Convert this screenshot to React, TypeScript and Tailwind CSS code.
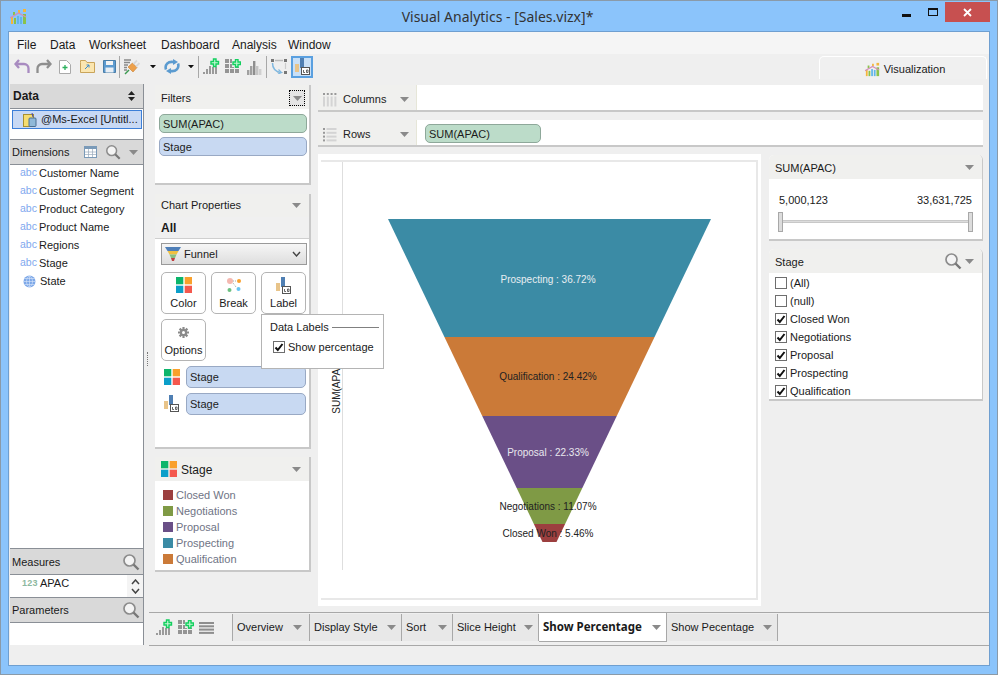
import React from "react";

const Caret = ({ c = "#8a8a8a", w = 9 }: { c?: string; w?: number }) => (
  <svg width={w} height={w * 5 / 9} viewBox="0 0 9 5"><path d="M0 0h9L4.500 5z" fill={c} /></svg>
);
const Search = ({ s = 18 }: { s?: number }) => (
  <svg width={s} height={s} viewBox="0 0 18 18" fill="none">
    <circle cx="7.500" cy="7.500" r="5.500" stroke="#8c8c8c" strokeWidth="1.700" fill="#f4f4f4" />
    <path d="M11.500 11.500 16.500 16.500" stroke="#777" strokeWidth="2.400" />
  </svg>
);
const Quad = ({ s = 16 }: { s?: number }) => (
  <svg width={s} height={s} viewBox="0 0 16 16">
    <rect x="0" y="0" width="7.300" height="7.300" fill="#0cb56b" />
    <rect x="8.700" y="0" width="7.300" height="7.300" fill="#f9a02c" />
    <rect x="0" y="8.700" width="7.300" height="7.300" fill="#0b9ec9" />
    <rect x="8.700" y="8.700" width="7.300" height="7.300" fill="#f4584e" />
  </svg>
);
const LabelIcon = () => (
  <svg width="15" height="17" viewBox="0 0 15 17">
    <rect x="0" y="6" width="4" height="8" fill="#e8c48a" />
    <rect x="5" y="0" width="4" height="10" fill="#4f7fb3" />
    <rect x="6.500" y="9.500" width="8" height="7" fill="#fff" stroke="#555" />
    <path d="M8.500 12v2.500h1.500M11.500 12h1.500v2.500h-1.500z" stroke="#444" fill="none" strokeWidth=".8" />
  </svg>
);
const PlusMark = ({ x, y }: { x: number; y: number }) => (
  <path
    transform={`translate(${x} ${y})`}
    d="M3 1h2.500v2.500H8V6H5.500v2.500H3V6H.5V3.500H3z"
    fill="#c9f7d6"
    stroke="#12cf5e"
    strokeWidth="1.400"
  />
);
const BarPlus = () => (
  <svg width="17" height="17" viewBox="0 0 17 17">
    {[[0, 14, 2], [3, 11, 5], [6, 8, 8], [9, 9, 7], [12, 9, 7]].map(([x, y, h]) => (
      <rect key={x} x={x} y={y} width="2" height={h} fill="#9a9a9a" />
    ))}
    <PlusMark x={7.500} y={0} />
  </svg>
);
const BarGray = () => (
  <svg width="15" height="16" viewBox="0 0 15 16">
    {[[0, 11, 5, "#a0a0a0"], [3, 7, 9, "#a0a0a0"], [6, 2, 14, "#8e8e8e"], [9, 7, 9, "#c4c4c4"], [12, 10, 6, "#d0d0d0"]].map(([x, y, h, c]) => (
      <rect key={x as number} x={x as number} y={y as number} width="2.400" height={h as number} fill={c as string} />
    ))}
  </svg>
);
const GridPlus = () => (
  <svg width="16" height="15" viewBox="0 0 16 15">
    {[0, 5, 10].map((x) => [0, 5, 10].map((y) => <rect key={`${x}${y}`} x={x} y={y} width="4" height="4" fill="#949494" />))}
    <rect x="7" y="0" width="9" height="8" fill="#f0f0f0" />
    <PlusMark x={7.500} y={-.5} />
  </svg>
);
const ListIcon = () => (
  <svg width="15" height="12" viewBox="0 0 15 12">
    {[0, 3.300, 6.600, 9.900].map((y) => <rect key={y} x="0" y={y} width="15" height="2" fill="#8e8e8e" />)}
  </svg>
);
const Check = ({ on }: { on: boolean }) => (
  <span className="w-[12px] h-[12px] shrink-0 border border-[#6e6e6e] bg-white flex items-center justify-center">
    {on && (
      <svg width="10" height="9" viewBox="0 0 10 9"><path d="M1.500 4.500 3.800 7 8.500 1" stroke="#111" strokeWidth="2" fill="none" /></svg>
    )}
  </span>
);
const AppLogo = ({ s = 17 }: { s?: number }) => (
  <svg width={s} height={s} viewBox="0 0 17 17">
    <rect x="1" y="9" width="2" height="7" fill="#f4b63c" />
    <rect x="4" y="10" width="2" height="6" fill="#8ac24a" />
    <rect x="7" y="8" width="2" height="8" fill="#62b6e8" />
    <rect x="10" y="9" width="2" height="7" fill="#62b6e8" />
    <rect x="13" y="1" width="3" height="3" fill="#f4b63c" />
    <rect x="13" y="6" width="3" height="10" fill="#8ac24a" />
    <rect x="8" y="2" width="2" height="3" fill="#f4b63c" />
    <rect x="3" y="4" width="2" height="3" fill="#8ac24a" />
    <path d="M0 10 8.500 5 16 9" stroke="#d48fb8" strokeWidth="1.400" fill="none" />
  </svg>
);

const Tool = ({ children, w = 23, cls = "" }: { children: React.ReactNode; w?: number; cls?: string }) => (
  <span style={{ width: w }} className={`h-[22px] flex items-center justify-center shrink-0 ${cls}`}>{children}</span>
);
const Sep = () => <span className="w-px h-[22px] bg-[#a8a8a8] shrink-0" />;
const BlackCaret = () => <Caret c="#111" w={6} />;

const Pill = ({ text, green = false, cls = "" }: { text: string; green?: boolean; cls?: string }) => (
  <div className={`h-[19px] rounded-[5px] border flex items-center pl-[3px] pt-[2px] text-[#1c1c1c] ${green ? "bg-[#bcdcc9] border-[#8ea89a]" : "bg-[#c8d9f2] border-[#99a9c4]"} ${cls}`}>{text}</div>
);

const PanelHead = ({ children, h = 24, cls = "pt-[2px]" }: { children: React.ReactNode; h?: number; cls?: string }) => (
  <div style={{ height: h }} className={`bg-[#f0f0ee] flex items-center justify-between pl-[6px] pr-[8px] shrink-0 ${cls}`}>{children}</div>
);

const ToolBtn = ({ icon, text }: { icon: React.ReactNode; text: string }) => (
  <div className="w-[45px] h-[42px] border border-[#b4b4b4] rounded-[5px] bg-white flex flex-col items-center pt-[3px]">
    <span className="h-[18px] flex items-center">{icon}</span>
    <span className="mt-[4px]">{text}</span>
  </div>
);

const Tab = ({ text, w, active = false, cls = "pr-[5px]" }: { text: string; w: number; active?: boolean; cls?: string }) => (
  <div style={{ width: w }} className={`flex items-center justify-between pl-[4px] shrink-0 border-r border-[#a8a8a8] ${cls} ${active ? "bg-white h-[29px] border-b -mt-[1px]" : "bg-[#e8e8e8] h-[27px]"}`}>
    <span className={active ? "font-['Noto_Sans',sans-serif] font-bold text-[11.500px]" : ""}>{text}</span><Caret />
  </div>
);

const dims = ["Customer Name", "Customer Segment", "Product Category", "Product Name", "Regions", "Stage"];
const legend = [["Closed Won", "#9c3f3f"], ["Negotiations", "#7f9a45"], ["Proposal", "#6a4f87"], ["Prospecting", "#3b8ba5"], ["Qualification", "#cb7a38"]];
const stage: [string, boolean][] = [["(All)", false], ["(null)", false], ["Closed Won", true], ["Negotiations", true], ["Proposal", true], ["Prospecting", true], ["Qualification", true]];

const F = (y: number) => y - 162;
const seg = (y1: number, y2: number) => {
  const hw = (y: number) => 161.500 - ((y - 219) * 154.500) / 323;
  const c = 549.500 - 321;
  return `${c - hw(y1)},${y1 - 162} ${c + hw(y1)},${y1 - 162} ${c + hw(y2)},${y2 - 162} ${c - hw(y2)},${y2 - 162}`;
};

export default function App() {
  return (
    <div className="w-[998px] h-[675px] bg-[#8bc4fb] border border-[#8a9aa8] flex flex-col font-['Liberation_Sans',sans-serif] text-[11px] leading-none text-[#1a1a1a] overflow-hidden">
      {/* title bar */}
      <div className="h-[30px] flex items-center shrink-0">
        <span className="ml-[9px]"><AppLogo /></span>
        <div className="flex-1 text-center text-[14px] text-[#333] pl-[66px] pt-[2px] font-['Noto_Sans',sans-serif]">Visual Analytics - [Sales.vizx]*</div>
        <div className="flex items-start self-start">
          <span className="w-[9px] h-[3px] bg-[#111] mt-[13px] mr-[17px]" />
          <span className="w-[10px] h-[8px] border border-[#111] border-t-[2px] mt-[7px] mr-[7px]" />
          <span className="w-[45px] h-[20px] bg-[#c75050] flex items-center justify-center mt-[1px] mr-[7px]">
            <svg width="9" height="9" viewBox="0 0 9 9"><path d="M1 1l7 7M8 1l-7 7" stroke="#fff" strokeWidth="1.800" /></svg>
          </span>
        </div>
      </div>

      {/* client */}
      <div className="mx-[7px] h-[635px] border border-[#6f9fd0] bg-[#efefef] flex flex-col shrink-0">
        <div className="h-[22px] bg-[#f5f5f5] flex items-center pl-[8px] pt-[3px] gap-[16px] text-[12px] shrink-0">
          <span className="w-[17px]">File</span>
          <span className="w-[23px]">Data</span>
          <span className="w-[56px]">Worksheet</span>
          <span className="w-[55px]">Dashboard</span>
          <span className="w-[40px]">Analysis</span>
          <span>Window</span>
        </div>

        <div className="h-[25px] flex items-center pl-[1px] shrink-0 relative">
          <Tool w={23}>
            <svg width="16" height="15" viewBox="0 0 16 15" fill="none"><path d="M5 1 1.500 5 5 9M2 5h8a4.500 4.500 0 0 1 4.500 4.500V14" stroke="#a88bc0" strokeWidth="2.300" /></svg>
          </Tool>
          <Tool w={21}>
            <svg width="16" height="15" viewBox="0 0 16 15" fill="none"><path d="M11 1l3.500 4L11 9M14 5H6a4.500 4.500 0 0 0-4.500 4.500V14" stroke="#8e8e8e" strokeWidth="2.300" /></svg>
          </Tool>
          <Tool w={21}>
            <svg width="12" height="14" viewBox="0 0 12 14"><path d="M.5.5h7l4 4v9H.5z" fill="#fff" stroke="#aaa" /><path d="M6 5v5M3.500 7.500h5" stroke="#2bb05c" strokeWidth="1.300" /></svg>
          </Tool>
          <Tool w={24}>
            <svg width="15" height="13" viewBox="0 0 15 13"><path d="M.5 2.500V.5h5l1.500 2h7.500v10H.5z" fill="#fbe6b0" stroke="#c9a45a" /><path d="M5 9l4-4M6.500 5H9v2.500" stroke="#3b8bcc" fill="none" /></svg>
          </Tool>
          <Tool w={20}>
            <svg width="13" height="13" viewBox="0 0 13 13"><path d="M.5.5h12v12H.5z" fill="#5d9bd0" stroke="#4a7ea8" /><rect x="3" y="1" width="7" height="4" fill="#f4f4f4" /><rect x="2.500" y="7.500" width="8" height="5" fill="#e8eef4" /></svg>
          </Tool>
          <Sep />
          <Tool w={25}>
            <svg width="17" height="17" viewBox="0 0 17 17">
              <path d="M0 2h7M0 4.500h6M0 7h4M0 9.500h3M0 12h3" stroke="#8a8a8a" strokeWidth="1.300" />
              <path d="M1 16 5 12" stroke="#3a9a50" strokeWidth="1.500" />
              <path d="M4 9l5 5 4-4.500L8.500 5z" fill="#eda04a" stroke="#c98030" strokeWidth=".6" />
              <path d="M9.500 6 13 2.500M12 8.500 15.500 5" stroke="#d8d8d8" strokeWidth="1.800" />
            </svg>
          </Tool>
          <Tool w={16}><BlackCaret /></Tool>
          <Tool w={22}>
            <svg width="16" height="15" viewBox="0 0 16 15" fill="none">
              <path d="M2 10.500C.5 6 4 2 9.500 3" stroke="#5b9bd0" strokeWidth="2.600" />
              <path d="M9 0l5 3-5 3z" fill="#5b9bd0" />
              <path d="M14 4.500c1.500 4.500-2 8.500-7.500 7.500" stroke="#5b9bd0" strokeWidth="2.600" />
              <path d="M7 9l-5 3 5 3z" fill="#5b9bd0" />
            </svg>
          </Tool>
          <Tool w={15}><BlackCaret /></Tool>
          <Sep />
          <Tool w={24}><BarPlus /></Tool>
          <Tool w={20}><GridPlus /></Tool>
          <Tool w={23}><BarGray /></Tool>
          <Sep />
          <Tool w={24}>
            <svg width="16" height="15" viewBox="0 0 16 15" fill="none">
              <path d="M4 1.500h8" stroke="#bbb" strokeWidth="1.500" />
              <path d="M14.500 4v6M6 13.500h6" stroke="#ccc" strokeWidth="1.200" />
              <rect x="0" y="0" width="3" height="3" fill="#777" /><rect x="13" y="0" width="3" height="3" fill="#777" /><rect x="13" y="12" width="3" height="3" fill="#777" />
              <path d="M1.500 4c0 5 3 8.500 8 9.500" stroke="#7fb8e0" strokeWidth="1.500" />
              <path d="M7.500 10.500l3 3-3.500 1.500" stroke="#7fb8e0" strokeWidth="1.200" />
            </svg>
          </Tool>
          <Tool w={22} cls="bg-[#c9e0f7] border-2 border-[#5aa0e0]"><LabelIcon /></Tool>

          <div className="absolute right-[2px] top-[2px] w-[168px] h-[23px] border-t border-l border-r border-white rounded-t-[5px] bg-[#f0f0f0] flex items-center justify-center gap-[4px] pl-[4px] pt-[3px]">
            <AppLogo s={15} />
            <span>Visualization</span>
          </div>
        </div>

        {/* main */}
        <div className="h-[566px] flex shrink-0 pt-[5px]">
          {/* left column */}
          <div className="w-[134px] flex flex-col shrink-0 border-r border-[#8a8f96] ml-px">
            <div className="h-[24px] bg-[#d9d9d9] flex items-center justify-between px-[3px] pr-[8px] font-bold text-[12px] shrink-0">
              <span>Data</span>
              <svg width="7" height="10" viewBox="0 0 7 10"><path d="M0 4h7L3.500 0zM0 6h7L3.500 10z" fill="#222" /></svg>
            </div>
            <div className="h-[32px] bg-white border-y border-[#8a8f96] pt-[1px] pl-[2px] pr-[1px] shrink-0">
              <div className="h-[19px] bg-[#c8d9f4] border border-[#3c7fd8] flex items-center pl-[10px] gap-[4px] whitespace-nowrap overflow-hidden">
                <svg width="14" height="14" viewBox="0 0 14 14" className="shrink-0"><rect x="0.500" y="1.500" width="10" height="12" fill="#f5dd70" stroke="#a89030" /><rect x="6" y="5" width="7" height="8.500" rx="1" fill="#8fb8d8" stroke="#4a6e90" /><path d="M9 0 10 4" stroke="#44a" /></svg>
                <span>@Ms-Excel [Untitl...</span>
              </div>
            </div>
            <div className="h-[24px] bg-[#d9d9d9] flex items-center pl-[2px] pr-[5px] shrink-0">
              <span className="flex-1">Dimensions</span>
              <svg width="13" height="12" viewBox="0 0 13 12" className="mr-[8px]"><rect x=".5" y=".5" width="12" height="11" fill="#fff" stroke="#7a9ab8" /><rect x=".5" y=".5" width="12" height="2.500" fill="#7a9ab8" /><path d="M4.500 3v8M8.500 3v8M1 6h11M1 8.500h11" stroke="#9ab" strokeWidth=".7" /></svg>
              <span className="mr-[8px]"><Search s={16} /></span>
              <Caret />
            </div>
            <div className="flex-1 bg-white border-y border-[#8a8f96] flex flex-col">
              {dims.map((d, i) => (
                <div key={d} className={`h-[18px] flex items-center pl-[10px] gap-[3px] whitespace-nowrap ${i === 0 ? "-mt-px" : ""}`}>
                  <span className="w-[16px] text-[#7fa8ee] text-[10.500px] leading-none -mt-[2px]">abc</span>
                  <span>{d}</span>
                </div>
              ))}
              <div className="h-[18px] flex items-center pl-[13px] gap-[4px]">
                <svg width="13" height="13" viewBox="0 0 13 13" fill="none"><circle cx="6.500" cy="6.500" r="6" fill="#7da8e8" /><path d="M.5 6.500h12M1.500 3.500h10M1.500 9.500h10M6.500.5v12M6.500.5c-4 3-4 9 0 12M6.500.5c4 3 4 9 0 12" stroke="#dbe7fa" strokeWidth=".6" /></svg>
                <span>State</span>
              </div>
            </div>
            <div className="h-[25px] bg-[#d9d9d9] flex items-center justify-between pl-[2px] pr-[3px] shrink-0"><span className="mt-[2px]">Measures</span><Search /></div>
            <div className="h-[24px] bg-white border-y border-[#8a8f96] flex items-start pl-[12px] gap-[4px] shrink-0 relative pt-[3px]">
              <span className="text-[#8cb8a0] text-[9px] font-bold w-[14px] mt-[1px] tracking-[.2px]">123</span>
              <span>APAC</span>
              <span className="absolute right-0 top-0 h-full w-[16px] bg-[#f4f4f4] flex flex-col items-center justify-around py-[2px]">
                <svg width="9" height="6" viewBox="0 0 9 6" fill="none"><path d="M1 5l3.500-4L8 5" stroke="#444" strokeWidth="1.500" /></svg>
                <svg width="9" height="6" viewBox="0 0 9 6" fill="none"><path d="M1 1l3.500 4L8 1" stroke="#444" strokeWidth="1.500" /></svg>
              </span>
            </div>
            <div className="h-[24px] bg-[#d9d9d9] flex items-center justify-between pl-[2px] pr-[3px] shrink-0"><span>Parameters</span><Search /></div>
            <div className="h-[23px] bg-white border-t border-[#8a8f96] shrink-0" />
          </div>

          {/* middle + right */}
          <div className="flex-1 flex flex-col min-w-0">
            <div className="h-[528px] flex shrink-0 items-start pt-px">
              {/* splitter area */}
              <div className="w-[11px] self-stretch flex items-center justify-center shrink-0 pb-[10px]">
                <span className="w-px h-[14px] border-l border-dotted border-[#777] mt-[30px] -ml-[5px]" />
              </div>
              {/* middle column */}
              <div className="w-[156px] flex flex-col gap-[9px] shrink-0">
                <div className="h-[100px] bg-white border-r-2 border-b-2 border-[#c8c8c8]">
                  <PanelHead>
                    <span>Filters</span>
                    <span className="w-[16px] h-[16px] border border-dotted border-black flex items-center justify-center -mr-[4px] bg-[#e4e4e4]"><Caret /></span>
                  </PanelHead>
                  <div className="px-[4px] pt-[5px] pr-[2px] flex flex-col gap-[4px]">
                    <Pill text="SUM(APAC)" green />
                    <Pill text="Stage" />
                  </div>
                </div>

                <div className="h-[255px] bg-white border-r-2 border-b-2 border-[#c8c8c8] relative">
                  <PanelHead h={23} cls=""><span>Chart Properties</span><Caret /></PanelHead>
                  <div className="h-[22px] bg-[#f0f0f0] border-b border-[#cfcfcf] flex items-center pl-[6px] font-bold text-[12px]">All</div>
                  <div className="pl-[6px] pr-[2px] pt-[4px]">
                    <div className="h-[22px] w-[146px] border border-[#9a9a9a] bg-gradient-to-b from-[#f6f6f6] to-[#dedede] flex items-center pl-[3px]">
                      <svg width="16" height="14" viewBox="0 0 16 14"><path d="M0 0h16l-2.500 4h-11z" fill="#4f7fb8" /><path d="M2.500 4h11L11.500 7.500h-7z" fill="#f0c040" /><path d="M4.500 7.500h7L10 11H6z" fill="#8ac080" /><path d="M6 11h4l-1 3H7z" fill="#c04040" /></svg>
                      <span className="ml-[3px] flex-1">Funnel</span>
                      <svg width="9" height="6" viewBox="0 0 9 6" fill="none" className="mr-[5px]"><path d="M1 1l3.500 4L8 1" stroke="#444" strokeWidth="1.400" /></svg>
                    </div>
                    <div className="flex gap-[5px] mt-[7px]">
                      <ToolBtn icon={<Quad />} text="Color" />
                      <ToolBtn text="Break" icon={
                        <svg width="16" height="16" viewBox="0 0 16 16"><circle cx="4" cy="4" r="3" fill="#f4b8b0" /><circle cx="13" cy="4" r="2" fill="#f9a02c" /><circle cx="3.500" cy="13" r="2" fill="#6cc080" /><circle cx="12.500" cy="12" r="2" fill="#68c4f0" /><path d="M7 4h3M7 6l3 4" stroke="#aaa" strokeDasharray="1 1" /></svg>
                      } />
                      <ToolBtn icon={<LabelIcon />} text="Label" />
                    </div>
                    <div className="mt-[5px]">
                      <ToolBtn text="Options" icon={
                        <svg width="13" height="13" viewBox="0 0 13 13"><path d="M6.500 1v11M1 6.500h11M2.600 2.600l7.800 7.800M10.400 2.600l-7.800 7.800" stroke="#8a8a8a" strokeWidth="2.200" /><circle cx="6.500" cy="6.500" r="3.600" fill="#8a8a8a" /><circle cx="6.500" cy="6.500" r="1.500" fill="#fff" /></svg>
                      } />
                    </div>
                    <div className="flex items-center mt-[4px] h-[23px]">
                      <span className="ml-[3px] mr-[6px] flex"><Quad /></span>
                      <Pill text="Stage" cls="w-[120px] h-[22px]" />
                    </div>
                    <div className="flex items-center mt-[4px] h-[23px]">
                      <span className="ml-[3px] mr-[7px] flex"><LabelIcon /></span>
                      <Pill text="Stage" cls="w-[120px] h-[22px]" />
                    </div>
                  </div>
                  <div className="absolute left-[106px] top-[120px] w-[123px] h-[55px] bg-white border border-[#b4b4b4] z-10 pl-[8px] pt-[7px]">
                    <div className="flex items-center">
                      <span className="whitespace-nowrap">Data Labels</span>
                      <span className="flex-1 h-px bg-[#808080] ml-[3px] mr-[4px]" />
                    </div>
                    <div className="flex items-center mt-[8px] ml-[3px] gap-[3px] whitespace-nowrap">
                      <Check on /><span>Show percentage</span>
                    </div>
                  </div>
                </div>

                <div className="h-[115px] -mt-px bg-white border-r-2 border-b-2 border-[#c8c8c8]">
                  <PanelHead cls="">
                    <span className="flex items-center gap-[4px] text-[12px]"><Quad /><span className="mt-[1px]">Stage</span></span>
                    <Caret />
                  </PanelHead>
                  <div className="pt-[6px] pl-[8px] flex flex-col">
                    {legend.map(([t, c]) => (
                      <div key={t} className="h-[16px] flex items-center gap-[3px] text-[#6f7485]">
                        <span style={{ background: c }} className="w-[10px] h-[10px]" />
                        <span>{t}</span>
                      </div>
                    ))}
                  </div>
                </div>
              </div>

              {/* right area */}
              <div className="flex-1 ml-[7px] mr-[6px] flex flex-col min-w-0">
                <div className="h-[27px] bg-white border-b-2 border-[#c8c8c8] flex shrink-0">
                  <div className="w-[99px] h-full bg-[#f0f0ee] border-r border-[#e6e6d8] flex items-center pl-[5px] pr-[7px] gap-[6px] pt-[4px]">
                    <svg width="14" height="14" viewBox="0 0 14 14">{[0, 3.800, 7.600, 11.400].map((x) => <g key={x}><rect x={x} y="0" width="2" height="2" fill="#999" /><rect x={x} y="3.500" width="2" height="10" fill="#d4d4d4" /></g>)}</svg>
                    <span className="flex-1 text-[#222]">Columns</span><Caret />
                  </div>
                </div>
                <div className="h-[27px] mt-[8px] bg-white border-b-2 border-[#c8c8c8] flex shrink-0">
                  <div className="w-[99px] h-full bg-[#f0f0ee] border-r border-[#e6e6d8] flex items-center pl-[5px] pr-[7px] gap-[6px] pt-[4px]">
                    <svg width="14" height="14" viewBox="0 0 14 14">{[0, 3.800, 7.600, 11.400].map((y) => <g key={y}><rect x="0" y={y} width="2" height="2" fill="#999" /><rect x="3.500" y={y} width="10" height="2" fill="#d4d4d4" /></g>)}</svg>
                    <span className="flex-1 text-[#222]">Rows</span><Caret />
                  </div>
                  <div className="pl-[8px] pt-[4px]"><Pill text="SUM(APAC)" green cls="w-[116px]" /></div>
                </div>
                <div className="flex mt-[7px] gap-[8px]">
                  <div className="w-[443px] h-[452px] bg-white pt-[6px] pl-[3px] pr-[3px] shrink-0">
                    <div className="w-[437px] h-[440px] border-t-2 border-r-2 border-b-2 border-[#e8e8e8] relative">
                      <svg width="435" height="436" viewBox="0 0 435 436" className="block">
                        <line x1="21.500" y1="0" x2="21.500" y2="408" stroke="#dedede" strokeWidth="1" />
                        <polygon points={seg(219, 337)} fill="#3b8ba5" />
                        <polygon points={seg(337, 416)} fill="#cb7a38" />
                        <polygon points={seg(416, 488)} fill="#6a4f87" />
                        <polygon points={seg(488, 524)} fill="#7f9a45" />
                        <polygon points={seg(524, 542)} fill="#9c3f3f" />
                        <g fontFamily="'Liberation Sans',sans-serif" fontSize="10" textAnchor="middle">
                          <text x="227" y={F(283)} fill="#e8eef2">Prospecting : 36.72%</text>
                          <text x="227" y={F(380)} fill="#222">Qualification : 24.42%</text>
                          <text x="227" y={F(456)} fill="#e8e8ee">Proposal : 22.33%</text>
                          <text x="227" y={F(510)} fill="#222">Negotiations : 11.07%</text>
                          <text x="227" y={F(537)} fill="#222">Closed Won : 5.46%</text>
                          <text transform={`translate(18.500 ${F(386)}) rotate(-90)`} fill="#222">SUM(APAC)</text>
                        </g>
                      </svg>
                    </div>
                  </div>

                  <div className="flex-1 flex flex-col gap-[8px] pt-[1px] min-w-0">
                    <div className="h-[86px] bg-white border-b-2 border-r border-[#c8c8c8] rounded-t-[5px] overflow-hidden">
                      <PanelHead h={24}><span>SUM(APAC)</span><span className="-mt-[2px]"><Caret /></span></PanelHead>
                      <div className="flex justify-between px-[10px] pt-[16px]"><span>5,000,123</span><span>33,631,725</span></div>
                      <div className="mx-[9px] mt-[6px] h-[20px] flex items-center justify-between relative">
                        <span className="absolute left-0 right-0 top-[8px] h-[3px] bg-[#dcdcdc] border-y border-[#c8c8c8]" />
                        <span className="w-[5px] h-[20px] bg-[#dcdcdc] border border-[#a8a8a8] relative" />
                        <span className="w-[5px] h-[20px] bg-[#dcdcdc] border border-[#a8a8a8] relative" />
                      </div>
                    </div>
                    <div className="h-[152px] bg-white border-b-2 border-r border-[#c8c8c8] rounded-t-[5px] overflow-hidden">
                      <PanelHead h={24}>
                        <span>Stage</span>
                        <span className="flex items-center gap-[3px] -mt-[2px]"><Search /><Caret /></span>
                      </PanelHead>
                      <div className="pl-[6px] flex flex-col pt-px">
                        {stage.map(([t, on]) => (
                          <div key={t} className="h-[18px] flex items-center gap-[3px]"><Check on={on} /><span>{t}</span></div>
                        ))}
                      </div>
                    </div>
                  </div>
                </div>
              </div>
            </div>

            {/* bottom tabs */}
            <div className="ml-[5px] h-[34px] border-t border-b border-[#a8a8a8] flex items-start shrink-0 pt-[1px]">
              <div className="w-[84px] h-[27px] flex items-center pl-[7px] gap-[5px] shrink-0 border-r border-[#a8a8a8]">
                <BarPlus /><GridPlus /><ListIcon />
              </div>
              <Tab text="Overview" w={77} cls="pr-[7px]" />
              <Tab text="Display Style" w={92} />
              <Tab text="Sort" w={51} />
              <Tab text="Slice Height" w={86} />
              <Tab text="Show Percentage" w={128} active />
              <Tab text="Show Pecentage" w={111} />
            </div>
          </div>
        </div>
        <div className="flex-1" />
      </div>
    </div>
  );
}
